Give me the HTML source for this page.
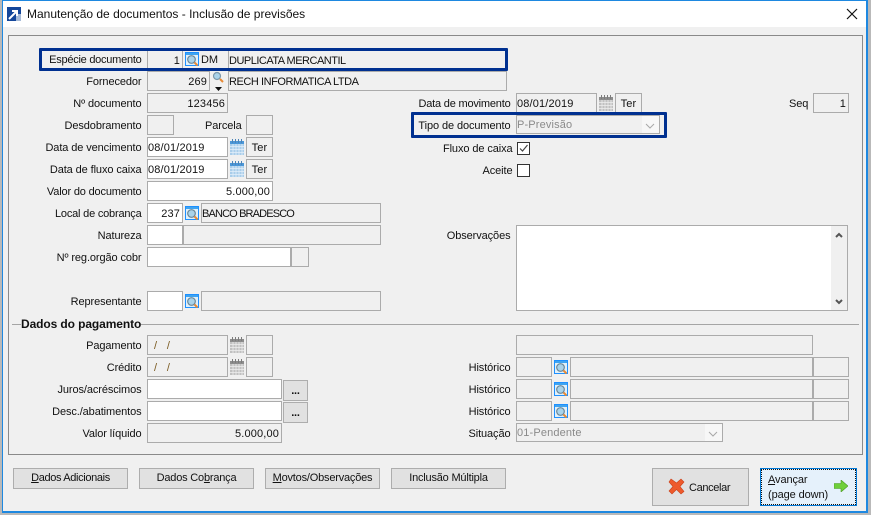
<!DOCTYPE html>
<html lang="pt"><head><meta charset="utf-8"><title>Manutenção de documentos</title>
<style>
html,body{margin:0;padding:0}
body{width:871px;height:515px;position:relative;overflow:hidden;background:#b9b9b9;font:11px/20px "Liberation Sans",sans-serif;letter-spacing:-.1px;color:#111}
div,svg{position:absolute;box-sizing:border-box}
.f{border:1px solid #ababab;background:#f0f0f0;height:20px;padding:0 2px;white-space:nowrap;line-height:20px;letter-spacing:.15px}
.w{background:#fff}.r{text-align:right}
.l{left:0;width:141.500px;text-align:right;height:20px;white-space:nowrap;line-height:22px}
.l2{left:300px;width:210.500px;text-align:right;height:20px;white-space:nowrap;line-height:22px}
.b{border:1px solid #adadad;background:#e1e1e1;text-align:center;height:21px;line-height:19px;white-space:nowrap;letter-spacing:-.2px}
.box{border:3px solid #003090;border-radius:1px}
.d{color:#7a5a20;padding-left:6px}
</style></head><body>
<svg width="0" height="0" style="position:absolute"><defs>
<symbol id="s" viewBox="0 0 14 14"><rect x=".5" y=".5" width="13" height="13" fill="#dff0fb" stroke="#1e90ff"/><rect x="1" y="1" width="12" height="2" fill="#3fa4f0"/><circle cx="6.500" cy="7.500" r="3.800" fill="#a9d3ea" stroke="#6d8797" stroke-width="1.200"/><path d="M9.500 10.500l3 3" stroke="#e88a35" stroke-width="2"/></symbol>
<symbol id="c" viewBox="0 0 14 16"><rect x="0" y="2" width="14" height="14" fill="#a9cdea"/><rect x="0" y="2" width="14" height="3" fill="#4b97d8"/><path d="M2.500 0v4M5.500 0v4M8.500 0v4M11.500 0v4" stroke="#4b84b8"/><path d="M0 7.500h14M0 10.500h14M0 13.500h14M3 5v11M6 5v11M9 5v11M12 5v11" stroke="#e4f0fa" stroke-width=".8"/></symbol>
<symbol id="g" viewBox="0 0 14 16"><rect x="0" y="2" width="14" height="14" fill="#c0c0c0"/><rect x="0" y="2" width="14" height="3" fill="#8c8c8c"/><path d="M2.500 0v4M5.500 0v4M8.500 0v4M11.500 0v4" stroke="#7c7c7c"/><path d="M0 7.500h14M0 10.500h14M0 13.500h14M3 5v11M6 5v11M9 5v11M12 5v11" stroke="#eee" stroke-width=".8"/></symbol>
</defs></svg>

<div style="left:2px;top:0;width:866px;height:513px;background:#f0f0f0;border:1px solid #1e88e0;border-width:1px 2px 2px 1px"></div>
<div style="left:3px;top:1px;width:863px;height:26px;background:#fff"></div>
<svg style="left:7px;top:7px" width="14" height="14" viewBox="0 0 14 14"><rect width="14" height="14" fill="#14479b"/><rect x="9" y="7" width="5" height="7" fill="#a7bbd8"/><path d="M2 12L9 5M5 4h5v5" stroke="#fff" stroke-width="2" fill="none"/></svg>
<div style="left:27px;top:4px;height:20px;white-space:nowrap;font-size:12px;letter-spacing:0">Manutenção de documentos - Inclusão de previsões</div>
<svg style="left:846px;top:8px" width="12" height="12" viewBox="0 0 12 12"><path d="M1 1l10 10M11 1L1 11" stroke="#111" stroke-width="1.200"/></svg>

<div style="left:8px;top:35px;width:855px;height:420px;border:1px solid #8a8a8a"></div>

<!-- left labels -->
<div class="l" style="top:49px;letter-spacing:-.25px">Espécie documento</div>
<div class="l" style="top:71px">Fornecedor</div>
<div class="l" style="top:93px">Nº documento</div>
<div class="l" style="top:115px">Desdobramento</div>
<div class="l" style="top:137px">Data de vencimento</div>
<div class="l" style="top:159px">Data de fluxo caixa</div>
<div class="l" style="top:181px;letter-spacing:-.17px">Valor do documento</div>
<div class="l" style="top:203px;letter-spacing:-.2px">Local de cobrança</div>
<div class="l" style="top:225px">Natureza</div>
<div class="l" style="top:247px">Nº reg.orgão cobr</div>
<div class="l" style="top:291px">Representante</div>
<div class="l" style="top:335px">Pagamento</div>
<div class="l" style="top:357px">Crédito</div>
<div class="l" style="top:379px">Juros/acréscimos</div>
<div class="l" style="top:401px">Desc./abatimentos</div>
<div class="l" style="top:423px">Valor líquido</div>
<div style="left:205px;top:116px;height:20px">Parcela</div>

<!-- left fields -->
<div class="f r" style="left:147px;top:50px;width:36px">1</div>
<svg style="left:185px;top:52px" width="14" height="14"><use href="#s"/></svg>
<div style="left:201px;top:50px;height:20px">DM</div>
<div class="f" style="left:228px;top:50px;width:279px;padding-left:0;letter-spacing:-.5px">DUPLICATA MERCANTIL</div>
<div class="f r" style="left:147px;top:71px;width:63px">269</div>
<svg style="left:212px;top:71px" width="13" height="13" viewBox="0 0 13 13"><circle cx="5" cy="5" r="3.500" fill="#a9d3ea" stroke="#7c98aa" stroke-width="1.200"/><path d="M8 8l3 3" stroke="#e88a35" stroke-width="2"/></svg>
<svg style="left:215px;top:87px" width="7" height="4"><path d="M0 0h7L3.500 4z" fill="#111"/></svg>
<div class="f" style="left:228px;top:71px;width:279px;padding-left:0;letter-spacing:-.45px">RECH INFORMATICA LTDA</div>
<div class="f r" style="left:147px;top:93px;width:81px">123456</div>
<div class="f" style="left:147px;top:115px;width:27px"></div>
<div class="f" style="left:246px;top:115px;width:27px"></div>
<div class="f w" style="left:147px;top:137px;width:81px;padding-left:0">08/01/2019</div>
<svg style="left:230px;top:139px" width="14" height="16"><use href="#c"/></svg>
<div class="f" style="left:246px;top:137px;width:27px;text-align:center">Ter</div>
<div class="f w" style="left:147px;top:159px;width:81px;padding-left:0">08/01/2019</div>
<svg style="left:230px;top:161px" width="14" height="16"><use href="#c"/></svg>
<div class="f" style="left:246px;top:159px;width:27px;text-align:center">Ter</div>
<div class="f w r" style="left:147px;top:181px;width:126px">5.000,00</div>
<div class="f w r" style="left:147px;top:203px;width:36px">237</div>
<svg style="left:185px;top:206px" width="14" height="14"><use href="#s"/></svg>
<div class="f" style="left:201px;top:203px;width:180px;padding-left:0;letter-spacing:-.85px">BANCO BRADESCO</div>
<div class="f w" style="left:147px;top:225px;width:36px"></div>
<div class="f" style="left:183px;top:225px;width:198px"></div>
<div class="f w" style="left:147px;top:247px;width:144px"></div>
<div class="f" style="left:291px;top:247px;width:18px"></div>
<div class="f w" style="left:147px;top:291px;width:36px"></div>
<svg style="left:185px;top:294px" width="14" height="14"><use href="#s"/></svg>
<div class="f" style="left:201px;top:291px;width:180px"></div>

<!-- separator -->
<div style="left:12px;top:324px;width:847px;height:1px;background:#a5a5a5"></div>
<div style="left:21px;top:314px;width:120px;height:20px;background:#f0f0f0;font-weight:bold;font-size:12px;white-space:nowrap">Dados do pagamento</div>

<div class="f d" style="left:147px;top:335px;width:81px">/&nbsp;&nbsp;&nbsp;/</div>
<svg style="left:230px;top:337px" width="14" height="16"><use href="#g"/></svg>
<div class="f" style="left:246px;top:335px;width:27px"></div>
<div class="f d" style="left:147px;top:357px;width:81px">/&nbsp;&nbsp;&nbsp;/</div>
<svg style="left:230px;top:359px" width="14" height="16"><use href="#g"/></svg>
<div class="f" style="left:246px;top:357px;width:27px"></div>
<div class="f w" style="left:147px;top:379px;width:135px"></div>
<div class="b" style="left:283px;top:380px;width:25px;font-weight:bold;line-height:21px">...</div>
<div class="f w" style="left:147px;top:401px;width:135px"></div>
<div class="b" style="left:283px;top:402px;width:25px;font-weight:bold;line-height:21px">...</div>
<div class="f r" style="left:147px;top:423px;width:135px">5.000,00</div>

<!-- right top -->
<div class="l2" style="top:93px;letter-spacing:-.2px">Data de movimento</div>
<div class="f" style="left:516px;top:93px;width:81px;padding-left:0">08/01/2019</div>
<svg style="left:599px;top:95px" width="14" height="16"><use href="#g"/></svg>
<div class="f" style="left:615px;top:93px;width:27px;text-align:center">Ter</div>
<div style="left:789px;top:94px;height:20px">Seq</div>
<div class="f r" style="left:813px;top:93px;width:36px">1</div>
<div class="l2" style="top:115px">Tipo de documento</div>
<div class="f" style="left:516px;top:115px;width:144px;height:19px;padding-left:0;color:#8a8a8a;line-height:19px">P-Previsão</div>
<div style="left:642px;top:116px;width:17px;height:17px;background:#f7f7f7"></div>
<svg style="left:645px;top:123px" width="10" height="6"><path d="M1 1l4 4 4-4" fill="none" stroke="#a8a8a8"/></svg>
<div class="l2" style="top:138px;width:212.500px">Fluxo de caixa</div>
<div style="left:517px;top:142px;width:13px;height:13px;background:#fff;border:1px solid #333"></div>
<svg style="left:517px;top:142px" width="13" height="13"><path d="M3 6.500l2.500 2.500 5-6" fill="none" stroke="#444" stroke-width="1.200"/></svg>
<div class="l2" style="top:160px;width:212.500px">Aceite</div>
<div style="left:517px;top:164px;width:13px;height:13px;background:#fff;border:1px solid #333"></div>
<div class="l2" style="top:225px">Observações</div>
<div class="f w" style="left:516px;top:225px;width:332px;height:86px"></div>
<div style="left:831px;top:226px;width:16px;height:84px;background:#f0f0f0"></div>
<svg style="left:835px;top:232px" width="8" height="6"><path d="M1 5l3-3 3 3" fill="none" stroke="#555" stroke-width="2"/></svg>
<svg style="left:835px;top:299px" width="8" height="6"><path d="M1 1l3 3 3-3" fill="none" stroke="#555" stroke-width="2"/></svg>

<!-- right bottom -->
<div class="f" style="left:516px;top:335px;width:297px"></div>
<div class="l2" style="top:357px">Histórico</div>
<div class="f" style="left:516px;top:357px;width:36px"></div>
<svg style="left:554px;top:360px" width="14" height="14"><use href="#s"/></svg>
<div class="f" style="left:570px;top:357px;width:243px"></div>
<div class="f" style="left:813px;top:357px;width:36px"></div>
<div class="l2" style="top:379px">Histórico</div>
<div class="f" style="left:516px;top:379px;width:36px"></div>
<svg style="left:554px;top:382px" width="14" height="14"><use href="#s"/></svg>
<div class="f" style="left:570px;top:379px;width:243px"></div>
<div class="f" style="left:813px;top:379px;width:36px"></div>
<div class="l2" style="top:401px">Histórico</div>
<div class="f" style="left:516px;top:401px;width:36px"></div>
<svg style="left:554px;top:404px" width="14" height="14"><use href="#s"/></svg>
<div class="f" style="left:570px;top:401px;width:243px"></div>
<div class="f" style="left:813px;top:401px;width:36px"></div>
<div class="l2" style="top:423px">Situação</div>
<div class="f" style="left:516px;top:423px;width:207px;height:19px;padding-left:0;color:#8a8a8a;line-height:19px">01-Pendente</div>
<div style="left:705px;top:424px;width:17px;height:17px;background:#f7f7f7"></div>
<svg style="left:708px;top:431px" width="10" height="6"><path d="M1 1l4 4 4-4" fill="none" stroke="#a8a8a8"/></svg>

<!-- highlight boxes -->
<div class="box" style="left:39px;top:48px;width:469px;height:23px"></div>
<div class="box" style="left:411px;top:112px;width:256px;height:26px"></div>

<!-- bottom buttons -->
<div class="b" style="left:13px;top:468px;width:115px;letter-spacing:-.35px"><u>D</u>ados Adicionais</div>
<div class="b" style="left:139px;top:468px;width:115px">Dados Co<u>b</u>rança</div>
<div class="b" style="left:265px;top:468px;width:115px"><u>M</u>ovtos/Observações</div>
<div class="b" style="left:391px;top:468px;width:115px">Inclusão Múltipla</div>

<div class="b" style="left:652px;top:468px;width:97px;height:38px"></div>
<svg style="left:668px;top:478px" width="17" height="17" viewBox="0 0 17 17"><path d="M3 1l5.500 4L13 1l3 3-4 4.500 4 5-3 2.500-4.500-4.500L4 16 1 13l4-4.500L1 4z" fill="#ee5a2c" stroke="#c9401a" stroke-width=".6"/></svg>
<div style="left:689px;top:478px;height:20px;letter-spacing:-.35px">Cancelar</div>

<div style="left:760px;top:468px;width:97px;height:38px;border:1px solid #0078d7;background:#e5f1fb"></div>
<div style="left:761px;top:469px;width:95px;height:36px;border:1px dotted #111"></div>
<div style="left:768px;top:470px;height:20px"><u>A</u>vançar</div>
<div style="left:768px;top:485px;height:20px;white-space:nowrap">(page down)</div>
<svg style="left:834px;top:480px" width="14" height="12" viewBox="0 0 14 12"><path d="M0 3.500h7V0l7 6-7 6V8.500H0z" fill="#6fcf3a" stroke="#4a9a22" stroke-width=".6"/></svg>
</body></html>
